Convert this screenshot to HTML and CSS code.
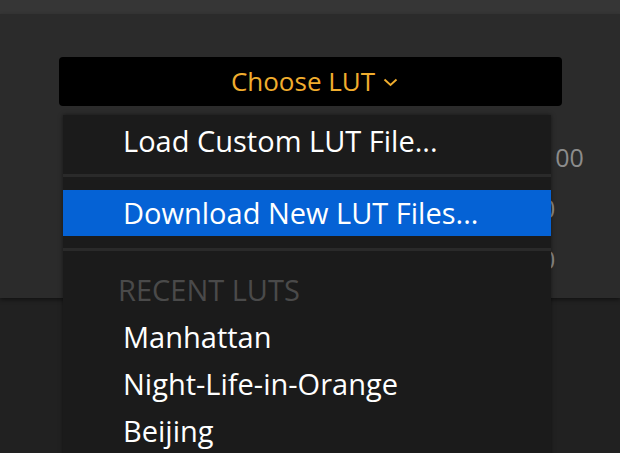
FILE: index.html
```html
<!DOCTYPE html>
<html lang="en">
  <head>
    <meta charset="UTF-8" />
    <meta name="viewport" content="width=device-width, initial-scale=1.0" />
    <title>Choose LUT</title>
    <link rel="stylesheet" href="styles.css">
  </head>
  <body>
    <div class="topbar"></div>

    <div class="panel">
      <button type="button" class="choose">
        Choose LUT
        <svg class="chevron" width="15" height="9" viewBox="0 0 15 9">
          <path d="M1.5 1.5 L7.5 7 L13.5 1.5" fill="none" stroke="currentColor" stroke-width="1.9" />
        </svg>
      </button>

      <div class="fields">
        <div class="field">100</div>
        <div class="field">0</div>
        <div class="field">0</div>
      </div>
    </div>

    <div class="below"></div>

    <!-- open dropdown -->
    <ul class="menu">
      <li class="item first">Load Custom LUT File...</li>
      <li class="sep"></li>
      <li class="item active">Download New LUT Files...</li>
      <li class="sep"></li>
      <li class="heading">RECENT LUTS</li>
      <li class="item">Manhattan</li>
      <li class="item">Night-Life-in-Orange</li>
      <li class="item">Beijing</li>
    </ul>
  </body>
</html>
```

FILE: styles.css
```css
body {
  margin: 0;
  background-color: #212121;
  font-family: "Open Sans", "Noto Sans", sans-serif;
  overflow: hidden;
}
.topbar {
  height: 14px;
  background-color: #363636;
}
.panel {
  height: 284px;
  padding: 43px 0 0 59px;
  box-sizing: border-box;
  background-color: #2b2b2b;
  box-shadow: 0 2px 4px rgba(0, 0, 0, 0.45);
  position: relative;
}
.choose {
  display: flex;
  align-items: center;
  justify-content: center;
  gap: 8px;
  width: 503px;
  height: 49px;
  padding: 0 0 2px 8px;
  border: none;
  border-radius: 4px;
  background-color: #000;
  color: #f0ad2e;
  font-family: "Open Sans", "Noto Sans", sans-serif;
  font-size: 26px;
}
.chevron {
  margin-top: 3px;
}
.fields {
  margin-top: 26px;
  padding-left: 482px;
}
.field {
  height: 51px;
  line-height: 51px;
  color: #8c8c8c;
  font-size: 25px;
}
.below {
  height: 160px;
}
.menu {
  position: absolute;
  left: 63px;
  top: 115px;
  width: 488px;
  height: 345px;
  margin: 0;
  padding: 0;
  list-style: none;
  background-color: #1b1b1b;
  box-shadow: 0 0 4px rgba(0, 0, 0, 0.5);
}
.item {
  height: 47px;
  line-height: 47px;
  padding-left: 60px;
  color: #fff;
  font-size: 29px;
}
.item.first {
  margin-top: 2px;
  height: 48px;
  line-height: 48px;
}
.item.active {
  height: 46px;
  line-height: 46px;
  background-color: #0562d5;
}
.sep {
  height: 3px;
  margin: 9px 0 13px;
  background-color: #2a2a2a;
}
.active + .sep {
  margin: 12px 0 15px;
}
.heading {
  height: 47px;
  line-height: 47px;
  padding-left: 55px;
  color: #4a4a4a;
  font-size: 29px;
}
```
